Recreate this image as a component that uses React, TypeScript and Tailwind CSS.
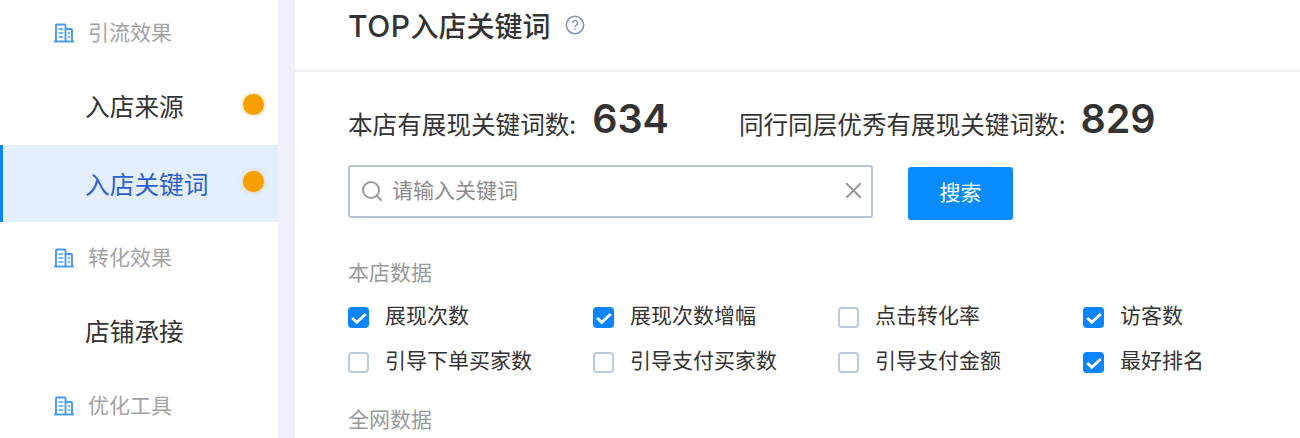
import React from 'react';
import { Search, X } from 'lucide-react';

const cjk = { fontFamily: '"Noto Sans CJK SC", "Liberation Sans", sans-serif' };

function BuildingIcon() {
  return (
    <svg width="22" height="22" viewBox="0 0 22 22" fill="none" stroke="#439af7" strokeWidth="1.9">
      <path d="M3 20V4.5a1 1 0 0 1 1-1h7.5a1 1 0 0 1 1 1V20M12.5 8H18a1 1 0 0 1 1 1v11" />
      <path d="M1 20.5h20" />
      <path d="M5.5 8h4.5M5.5 12h4.5M5.5 16h4.5M15 12h2M15 16h2" strokeWidth="1.6" />
    </svg>
  );
}

function SideHeader({ label }: { label: string }) {
  return (
    <div className="flex h-[70px] items-center pl-[53px]">
      <BuildingIcon />
      <span className="ml-[13px] text-[21px] text-[#a3a3a3]">{label}</span>
    </div>
  );
}

function SideItem({ label, dot, active }: { label: string; dot?: boolean; active?: boolean }) {
  return (
    <div
      className={
        active
          ? 'relative flex h-[77px] items-center border-l-[3px] border-[#0a84ff] bg-[#e3effd] pl-[82px] text-[24.7px] text-[#2f5fd0]'
          : 'relative flex h-[78px] items-center pl-[85px] text-[24.7px] text-[#333333]'
      }
    >
      {label}
      {dot && (
        <span
          className={
            active
              ? 'absolute right-[14px] top-[26px] h-[21px] w-[21px] rounded-full bg-[#f5a000] shadow-[0_0_4px_rgba(245,160,0,0.5)]'
              : 'absolute right-[14px] top-[27px] h-[21px] w-[21px] rounded-full bg-[#f5a000] shadow-[0_0_4px_rgba(245,160,0,0.5)]'
          }
        />
      )}
    </div>
  );
}

function Check({ label, checked }: { label: string; checked?: boolean }) {
  return (
    <div className="flex h-[45px] items-center">
      {checked ? (
        <span className="mt-[6px] flex h-[21px] w-[21px] items-center justify-center rounded-[4px] bg-[#0a84ff]">
          <svg width="18" height="18" viewBox="0 0 16 16" fill="none" stroke="#ffffff" strokeWidth="2.5">
            <path d="M2 8l4 3.8L14 4.5" />
          </svg>
        </span>
      ) : (
        <span className="mt-[6px] h-[21px] w-[21px] rounded-[4px] border-2 border-[#bccada] bg-white" />
      )}
      <span className="ml-[16px] text-[21px] text-[#333333]">{label}</span>
    </div>
  );
}

export default function App() {
  return (
    <div className="flex h-[438px] w-[1300px] overflow-hidden bg-white" style={cjk}>
      <div className="-mt-[3px] w-[278px] shrink-0 bg-white">
        <SideHeader label="引流效果" />
        <SideItem label="入店来源" dot />
        <SideItem label="入店关键词" dot active />
        <SideHeader label="转化效果" />
        <SideItem label="店铺承接" />
        <SideHeader label="优化工具" />
      </div>
      <div className="w-[17px] shrink-0 bg-[#f0f0fa]" />
      <div className="min-w-0 flex-1">
        <div className="flex h-[72px] items-center border-b-2 border-[#f0f0f0] pb-[18px] pl-[53px]">
          <span className="text-[28px] font-medium text-[#333333]">
            <span className="font-['Inter'] text-[30px] tracking-[0.5px]">TOP</span>入店关键词
          </span>
          <svg className="ml-[15px] mb-[2px]" width="20" height="20" viewBox="0 0 20 20" fill="none" stroke="#8596b8" strokeWidth="1.6">
            <circle cx="10" cy="10" r="8.7" />
            <path d="M7.5 8a2.5 2.5 0 1 1 3.8 2.1c-.9.5-1.3 1-1.3 2" />
            <path d="M10 13.4v1.6" />
          </svg>
        </div>
        <div className="pl-[53px]">
          <div className="mt-[22px] flex h-[50px] items-center text-[24.6px] text-[#333333]">
            <span className="mt-[8px]">本店有展现关键词数:</span>
            <span className="ml-[16px] mt-[2px] font-['Inter'] text-[39.5px] font-semibold">634</span>
            <span className="ml-[70px] mt-[8px]">同行同层优秀有展现关键词数:</span>
            <span className="ml-[15px] mt-[2px] font-['Inter'] text-[39.5px] font-semibold">829</span>
          </div>
          <div className="mt-[21px] flex items-start">
            <div className="flex h-[53px] w-[525px] items-center rounded-[3px] border-2 border-[#b8c4d0] pl-[10px] pr-[4px]">
              <Search size={24} strokeWidth={2} className="mb-[2px] text-[#999999]" />
              <span className="ml-[8px] flex-1 pb-[4px] text-[21px] text-[#8c8c8c]">请输入关键词</span>
              <X size={27} strokeWidth={1.7} className="mb-[2px] text-[#999999]" />
            </div>
            <button className="ml-[35px] mt-[2px] h-[53px] w-[105px] rounded-[3px] bg-[#0a8cff] pb-[4px] text-[21px] text-white">搜索</button>
          </div>
          <div className="mt-[36px] text-[21px] leading-[30px] text-[#999999]">本店数据</div>
          <div className="mt-[6px] grid grid-cols-[245px_245px_245px_1fr]">
            <Check label="展现次数" checked />
            <Check label="展现次数增幅" checked />
            <Check label="点击转化率" />
            <Check label="访客数" checked />
            <Check label="引导下单买家数" />
            <Check label="引导支付买家数" />
            <Check label="引导支付金额" />
            <Check label="最好排名" checked />
          </div>
          <div className="mt-[21px] text-[21px] leading-[30px] text-[#999999]">全网数据</div>
        </div>
      </div>
    </div>
  );
}
